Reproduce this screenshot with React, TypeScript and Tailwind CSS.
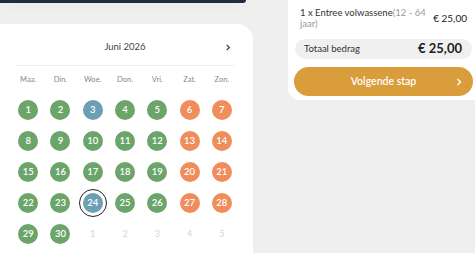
import React from "react";

type Day = { n: number; kind: "g" | "o" | "b" | "x"; sel?: boolean };

const days: Day[] = [];
for (let i = 1; i <= 30; i++) {
  const dow = (i - 1) % 7;
  let kind: Day["kind"] = dow >= 5 ? "o" : "g";
  if (i === 3 || i === 24) kind = "b";
  days.push({ n: i, kind, sel: i === 24 });
}
for (let i = 1; i <= 5; i++) days.push({ n: i, kind: "x" });

const weekdays = ["Maa.", "Din.", "Woe.", "Don.", "Vri.", "Zat.", "Zon."];

const bg: Record<string, string> = {
  g: "bg-[#6ba56a]",
  o: "bg-[#ef8d5b]",
  b: "bg-[#6c9fb4]",
};

export default function App() {
  return (
    <div
      className="h-[253px] w-[475px] overflow-hidden bg-[#efefef] flex"
      style={{ fontFamily: "Lato, 'Open Sans', sans-serif" }}
    >
      <div className="w-[253px] flex flex-col shrink-0">
        <div className="h-[3px] w-[246px] bg-[#1c2b3e] rounded-br-[4px] shadow-[0_4px_10px_rgba(0,0,0,0.05)]" />
        <div className="mt-[21px] flex-1 bg-white rounded-tr-[16px] pl-[12px] pt-[14px]">
          <div className="w-[226px] h-[18px] flex items-center justify-between">
            <div className="w-[20px]" />
            <div className="text-[9.5px] text-[#444]">Juni 2026</div>
            <div className="w-[20px] flex items-center justify-center">
              <svg width="6" height="7" viewBox="0 0 6 8" fill="none">
                <path d="M1.5 1 L4.5 4 L1.5 7" stroke="#333" strokeWidth="1.3" />
              </svg>
            </div>
          </div>
          <div className="mt-[9px] mx-[3px] w-[220px] h-px bg-[#f0f0f0]" />
          <div className="mt-[8px] w-[226px] grid grid-cols-7 h-[12px] items-center">
            {weekdays.map((w) => (
              <div key={w} className="text-center text-[7.5px] text-[#888]">
                {w}
              </div>
            ))}
          </div>
          <div className="mt-[14px] w-[226px] grid grid-cols-7 gap-y-[11px]">
            {days.map((d, i) => (
              <div key={i} className="h-[20px] flex items-center justify-center">
                {d.kind === "x" ? (
                  <span className="text-[9px] text-[#d4d4d4]">{d.n}</span>
                ) : d.sel ? (
                  <div className="w-[28px] h-[28px] rounded-full border-[1.5px] border-[#222] flex items-center justify-center shrink-0">
                    <div
                      className={`w-[20px] h-[20px] rounded-full ${bg[d.kind]} flex items-center justify-center text-white text-[9.5px] font-semibold`}
                    >
                      {d.n}
                    </div>
                  </div>
                ) : (
                  <div
                    className={`w-[20px] h-[20px] rounded-full ${bg[d.kind]} flex items-center justify-center text-white text-[9.5px] font-semibold`}
                  >
                    {d.n}
                  </div>
                )}
              </div>
            ))}
          </div>
        </div>
      </div>
      <div className="ml-[35px] w-[187px] shrink-0">
        <div className="bg-white rounded-bl-[12px] h-[100px] pl-[6px] pr-[2px] pt-[7px]">
          <div className="flex justify-between pl-[6px] pr-[6px] h-[27px]">
            <div className="w-[130px] text-[9.5px] leading-[11px] text-[#333]">
              <div>
                1 x Entree volwassene<span className="text-[#999]">(12 - 64</span>
              </div>
              <div className="text-[#999]">jaar)</div>
            </div>
            <div className="text-[10px] text-[#222] pt-[4px]">€ 25,00</div>
          </div>
          <div className="mt-[5px] ml-[1px] mr-[1px] h-[20px] rounded-full bg-[#f0f0f0] flex items-center justify-between pl-[9px] pr-[10px]">
            <span className="text-[9.5px] text-[#333]">Totaal bedrag</span>
            <span className="text-[13px] font-bold text-[#222]">€ 25,00</span>
          </div>
          <div className="mt-[8px] h-[29px] rounded-full bg-[#d99d3c] flex items-center justify-center relative">
            <span className="text-white text-[10.5px] font-semibold">Volgende stap</span>
            <svg className="absolute right-[11px]" width="6" height="8" viewBox="0 0 6 8" fill="none">
              <path d="M1.5 1 L4.5 4 L1.5 7" stroke="#fff" strokeWidth="1.4" />
            </svg>
          </div>
        </div>
      </div>
    </div>
  );
}
